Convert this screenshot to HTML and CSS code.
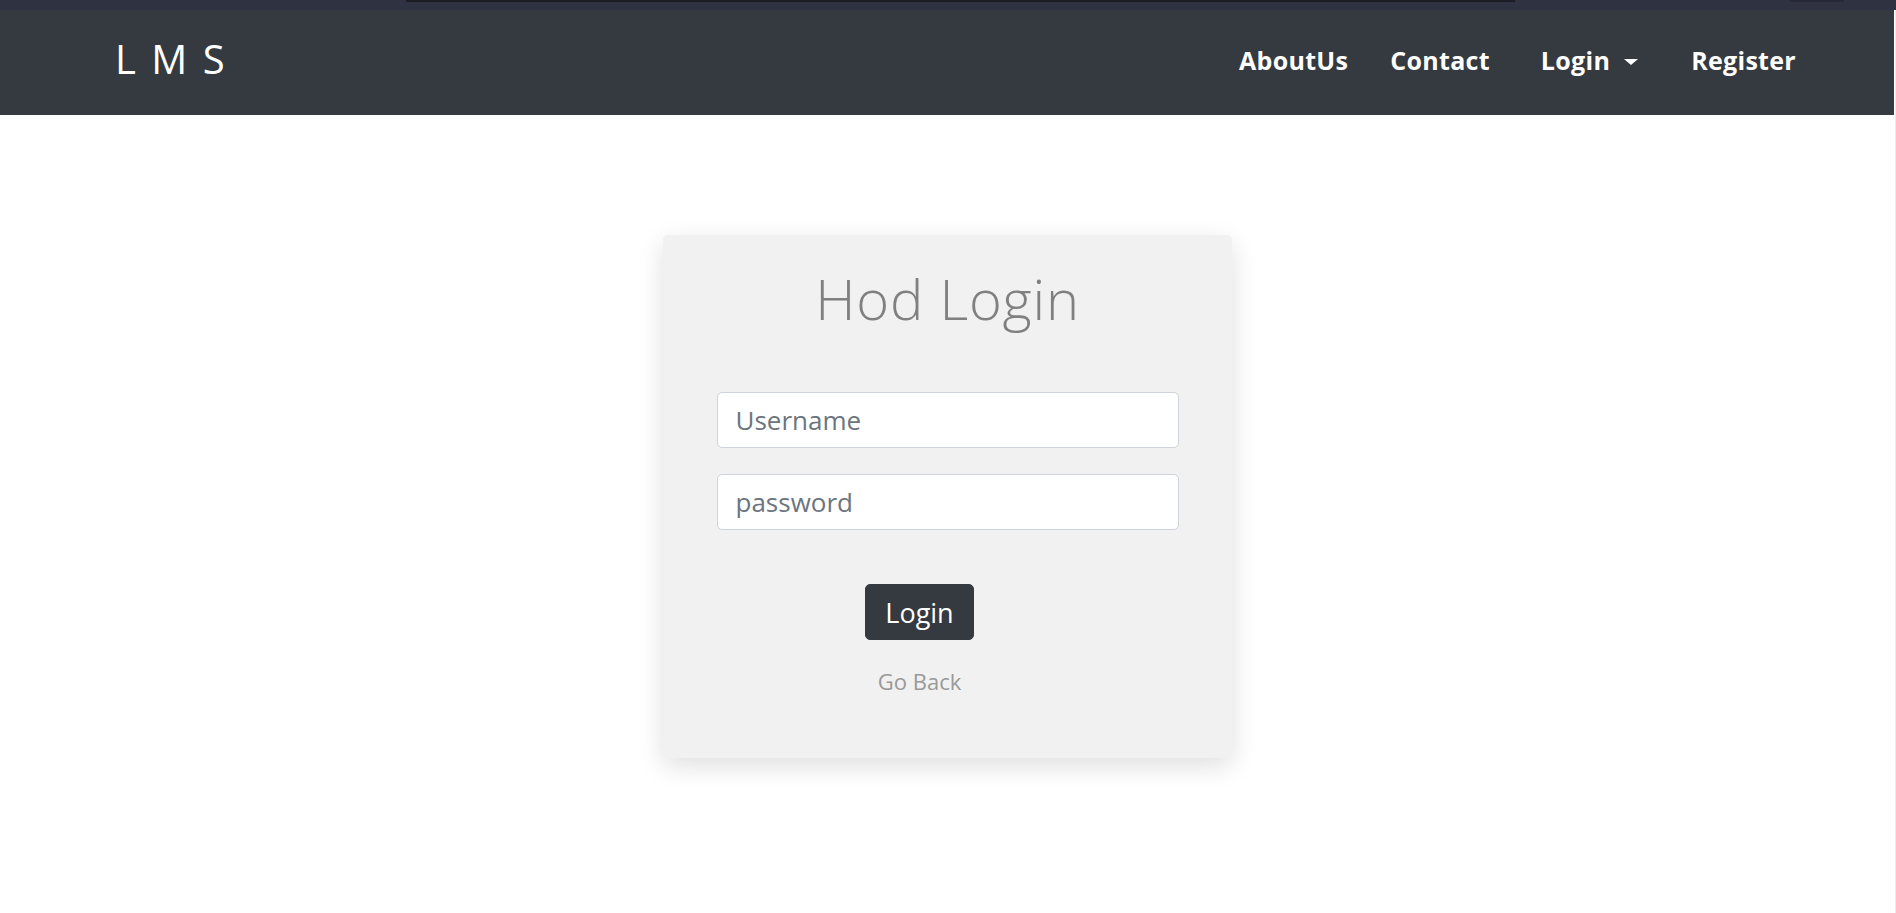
FILE: index.html
```html
<!DOCTYPE html>
<html lang="en">
<head>
<meta charset="utf-8">
<title>Hod Login</title>
<link rel="stylesheet" href="styles.css">
</head>
<body>
<div class="topstrip">
  <div class="topbar-dark"></div>
  <div class="topbar-small"></div>
</div>
<div class="frame">
  <div class="content">
    <nav class="navbar">
      <a class="brand" href="#">L M S</a>
      <div class="links">
        <a class="link link-about" href="#">AboutUs</a>
        <a class="link link-contact" href="#">Contact</a>
        <a class="link link-login" href="#">Login<span class="caret"></span></a>
        <a class="link link-register" href="#">Register</a>
      </div>
    </nav>
    <main class="main">
      <div class="card">
        <h1 class="title">Hod Login</h1>
        <form class="form">
          <input class="field" type="text" placeholder="Username">
          <input class="field field-second" type="password" placeholder="password">
          <div class="actions">
            <button class="btn" type="button">Login</button>
            <a class="back" href="#">Go Back</a>
          </div>
        </form>
      </div>
    </main>
  </div>
  <div class="edge"></div>
</div>
</body>
</html>
```
FILE: styles.css
```css
* { box-sizing: border-box; }
html, body { margin: 0; padding: 0; }
body {
  font-family: "Open Sans", "Liberation Sans", sans-serif;
  background: #ffffff;
  width: 1896px;
  height: 913px;
  overflow: hidden;
}
.topstrip {
  height: 10px;
  background: #2f3241;
  display: flex;
  align-items: flex-start;
}
.topbar-dark {
  margin-left: 406px;
  width: 1109px;
  height: 2px;
  background: #1c1d24;
}
.topbar-small {
  margin-left: 275px;
  width: 54px;
  height: 2px;
  background: #272a36;
}
.frame {
  display: flex;
  height: 903px;
}
.content {
  flex: 1;
  display: flex;
  flex-direction: column;
}
.edge {
  width: 2px;
  background: #ececec;
  border-left: 1px solid #ffffff;
}
.navbar {
  height: 105px;
  background: #343a40;
  display: flex;
  align-items: flex-start;
  padding-left: 115px;
  padding-right: 98px;
}
.brand {
  color: #ffffff;
  text-decoration: none;
  font-size: 40px;
  line-height: 40px;
  font-weight: 500;
  letter-spacing: 2.5px;
  margin-top: 29px;
  white-space: pre;
}
.links {
  margin-left: auto;
  display: flex;
  align-items: flex-start;
  margin-top: 38px;
}
.link {
  color: #ffffff;
  text-decoration: none;
  font-size: 25px;
  line-height: 25px;
  font-weight: 700;
  letter-spacing: 0.3px;
  display: flex;
  align-items: center;
}
.link-contact { margin-left: 42px; }
.link-login { margin-left: 51px; }
.link-register { margin-left: 53px; }
.caret {
  display: inline-block;
  width: 0;
  height: 0;
  margin-left: 14px;
  margin-top: 2px;
  border-top: 6px solid #ffffff;
  border-left: 7px solid transparent;
  border-right: 7px solid transparent;
}
.main {
  flex: 1;
  display: flex;
  justify-content: center;
  align-items: flex-start;
  padding-top: 120px;
}
.card {
  width: 569px;
  height: 523px;
  background: #f1f1f1;
  border-radius: 5px;
  box-shadow: 0 8px 26px rgba(0, 0, 0, 0.13);
  padding: 31px 53px 0 54px;
  display: flex;
  flex-direction: column;
}
.title {
  margin: 0;
  font-size: 56px;
  line-height: 65px;
  font-weight: 300;
  letter-spacing: 0.8px;
  color: #808080;
  text-align: center;
}
.form {
  margin-top: 61px;
  display: flex;
  flex-direction: column;
}
.field {
  height: 56px;
  width: 462px;
  border: 1px solid #ced4da;
  border-radius: 5px;
  background: #ffffff;
  padding: 0 18px;
  font-family: "Open Sans", "Liberation Sans", sans-serif;
  font-size: 26px;
  color: #495057;
  outline: none;
}
.field::placeholder {
  color: #6c757d;
  opacity: 1;
}
.field-second { margin-top: 26px; }
.actions {
  width: 406px;
  margin-top: 54px;
  display: flex;
  flex-direction: column;
  align-items: center;
}
.btn {
  width: 109px;
  height: 56px;
  background: #343a40;
  color: #ffffff;
  border: 1px solid #343a40;
  border-radius: 5px;
  font-family: "Open Sans", "Liberation Sans", sans-serif;
  font-size: 27px;
  line-height: 1;
  padding: 0;
  cursor: pointer;
}
.back {
  margin-top: 26px;
  font-size: 22px;
  line-height: 30px;
  color: #999999;
  text-decoration: none;
}
```
